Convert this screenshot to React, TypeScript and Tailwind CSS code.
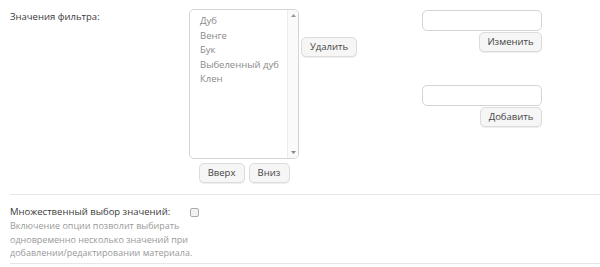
const font = { fontFamily: '"Open Sans", "DejaVu Sans", sans-serif' };

function Btn({ children, className = "" }: { children: React.ReactNode; className?: string }) {
  return (
    <button
      className={
        "h-[20px] rounded-[5px] border border-[#dcdcdc] bg-[#f6f6f6] text-[9.5px] leading-none text-[#444] shadow-[0_1px_0_#eee] " +
        className
      }
    >
      {children}
    </button>
  );
}

const items = ["Дуб", "Венге", "Бук", "Выбеленный дуб", "Клен"];

export default function App() {
  return (
    <div className="w-[600px] h-[267px] bg-white overflow-hidden pl-[10px]" style={font}>
      <div className="flex pt-[9px] h-[194px]">
        <div className="w-[179px] text-[9.5px] leading-[14px] text-[#3a3a3a] pt-[1px]">Значения фильтра:</div>

        <div className="flex flex-col items-center w-[110px]">
          <div className="w-[110px] h-[150px] border border-[#d4d4d4] rounded-[5px] flex overflow-hidden">
            <div className="flex-1 pl-[10px] pt-[4px] text-[9.5px] leading-[14.5px] text-[#8a8a8a]">
              {items.map((t) => (
                <div key={t}>{t}</div>
              ))}
            </div>
            <div className="w-[11px] border-l border-[#ececec] bg-[#fafafa] flex flex-col justify-between items-center py-[4px]">
              <svg width="5" height="3" viewBox="0 0 5 3">
                <path d="M2.5 0 L5 3 L0 3 Z" fill="#999" />
              </svg>
              <svg width="5" height="3" viewBox="0 0 5 3">
                <path d="M0 0 L5 0 L2.5 3 Z" fill="#888" />
              </svg>
            </div>
          </div>
          <div className="flex gap-[4px] mt-[4px]">
            <Btn className="w-[46px]">Вверх</Btn>
            <Btn className="w-[41px]">Вниз</Btn>
          </div>
        </div>

        <div className="ml-[2px] pt-[23px]">
          <Btn className="w-[56px]">Удалить</Btn>
        </div>

        <div className="ml-[65px] flex flex-col items-end w-[120px] pt-[1px]">
          <input className="w-[120px] h-[21px] border border-[#d4d4d4] rounded-[5px]" />
          <Btn className="w-[63px] mt-[1px]">Изменить</Btn>
          <input className="w-[120px] h-[21px] border border-[#d4d4d4] rounded-[5px] mt-[33px]" />
          <Btn className="w-[62px] mt-[1px]">Добавить</Btn>
        </div>
      </div>

      <div className="border-t border-[#e6e6e6] pt-[10px] h-[70px] border-b">
        <div className="flex items-center">
          <div className="w-[180px] text-[9.5px] leading-[14px] text-[#3a3a3a]">Множественный выбор значений:</div>
          <div className="w-[9px] h-[9px] border border-[#aaa] rounded-[2px] bg-[#f2f2f2]" />
        </div>
        <div className="w-[190px] text-[9px] leading-[13.5px] text-[#999]">
          Включение опции позволит выбирать одновременно несколько значений при добавлении/редактировании материала.
        </div>
      </div>
    </div>
  );
}
